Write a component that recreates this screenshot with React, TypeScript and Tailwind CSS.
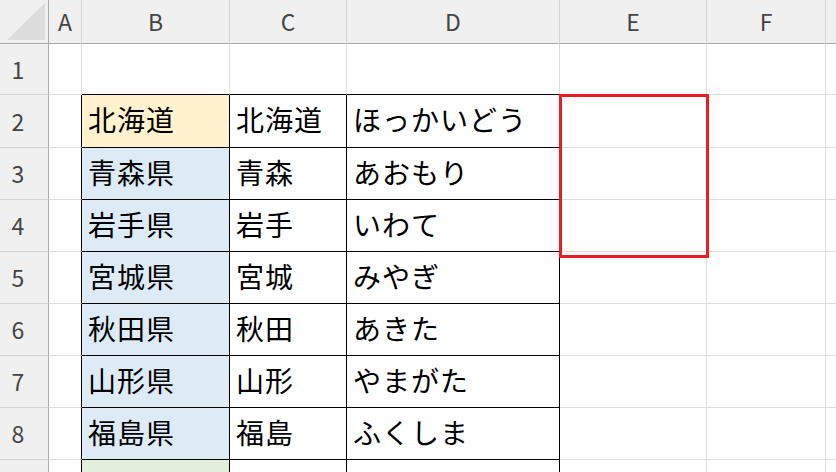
import React from 'react';

const cols = ['A', 'B', 'C', 'D', 'E', 'F', ''];
const rowCount = 9;

const data: Record<number, string[]> = {
    2: ['北海道', '北海道', 'ほっかいどう'],
    3: ['青森県', '青森', 'あおもり'],
    4: ['岩手県', '岩手', 'いわて'],
    5: ['宮城県', '宮城', 'みやぎ'],
    6: ['秋田県', '秋田', 'あきた'],
    7: ['山形県', '山形', 'やまがた'],
    8: ['福島県', '福島', 'ふくしま'],
    9: ['', '', ''],
};

const font = { fontFamily: '"Noto Sans CJK JP", "Noto Sans", sans-serif' };

const inTable = (r: number, c: number) => r >= 2 && r <= 9 && c >= 1 && c <= 3;

const fillFor = (r: number, c: number) => {
    if (c !== 1) return 'bg-white';
    if (r === 2) return 'bg-[#fff2cc]';
    if (r >= 3 && r <= 8) return 'bg-[#ddebf7]';
    if (r === 9) return 'bg-[#e2efda]';
    return 'bg-white';
};

const App: React.FC = () => {
    return (
        <div className="relative w-[836px] h-[472px] overflow-hidden bg-white" style={font}>
            <div className="grid grid-cols-[49px_33px_148px_117px_213px_147px_119px_1fr] grid-rows-[44px_51px_53px_52px_52px_52px_52px_52px_52px_52px]">
                {/* corner */}
                <div className="relative bg-[#f0f0f0] border-r border-b border-[#ababab]">
                    <svg className="absolute left-0 top-0" width="48" height="43">
                        <polygon points="45,3 45,40 7,40" fill="#dcdcdc" />
                    </svg>
                </div>
                {/* column headers */}
                {cols.map((c, i) => (
                    <div
                        key={i}
                        className={`flex items-center justify-center bg-[#f0f0f0] border-b border-b-[#ababab] ${i < 6 ? 'border-r border-r-[#d4d4d4]' : ''} text-[23px] text-[#444444]`}
                    >
                        {c}
                    </div>
                ))}
                {/* rows */}
                {Array.from({ length: rowCount }, (_, ri) => {
                    const r = ri + 1;
                    return (
                        <React.Fragment key={r}>
                            <div className="flex items-center justify-center pr-[12px] bg-[#f0f0f0] border-r border-r-[#ababab] border-b border-b-[#d4d4d4] text-[23px] text-[#444444]">
                                {r < 9 ? r : ''}
                            </div>
                            {cols.map((_, ci) => {
                                const rightBlack = inTable(r, ci) || (ci === 0 && r >= 2);
                                const bottomBlack = inTable(r, ci) || (r === 1 && ci >= 1 && ci <= 3);
                                const text = ci >= 1 && ci <= 3 ? data[r]?.[ci - 1] ?? '' : '';
                                return (
                                    <div
                                        key={ci}
                                        className={`flex items-center pl-[6px] pb-[4px] whitespace-nowrap overflow-hidden text-[28px] tracking-[1px] text-black ${fillFor(r, ci)} ${ci < 6 ? 'border-r' : ''} border-b ${rightBlack ? 'border-r-black' : 'border-r-[#dddddd]'} ${bottomBlack ? 'border-b-black' : 'border-b-[#dddddd]'}`}
                                    >
                                        {text}
                                    </div>
                                );
                            })}
                        </React.Fragment>
                    );
                })}
            </div>
            {/* selection box E2:E4 */}
            <div className="absolute left-[559px] top-[94px] w-[150px] h-[164px] border-[3px] border-[#ed1c24] pointer-events-none" />
        </div>
    );
};

export default App;
